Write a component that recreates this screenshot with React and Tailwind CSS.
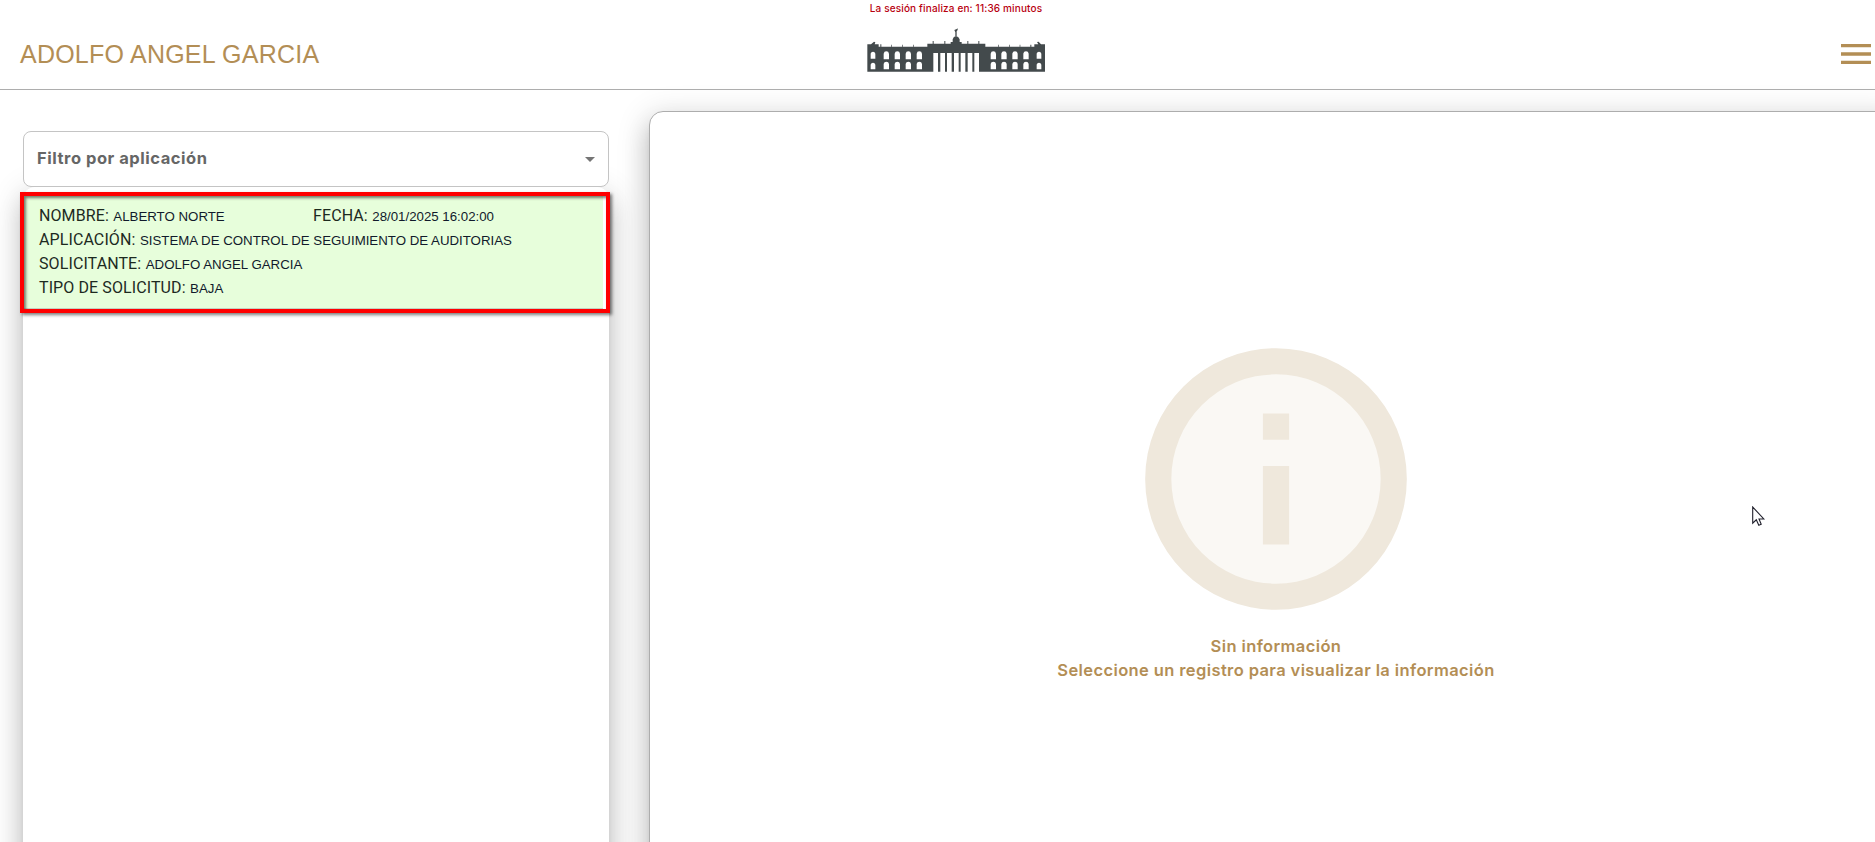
const windowsX = [130, 163, 196, 229, 451, 483, 516, 549];
const shadow =
  "shadow-[0px_8px_10px_-5px_rgba(0,0,0,0.2),0px_16px_24px_2px_rgba(0,0,0,0.14),0px_6px_30px_5px_rgba(0,0,0,0.12)]";

function Palace() {
  return (
    <svg className="h-[45px] w-[179px]" viewBox="80 82 537 135" fill="#434a4c">
      <path d="M81 216V134H92L101 126L105 128L103 134H115V141H120V134H123V141H153V135H155V141H186V135H188V141H218V135H220V141H261V132H277V124H280V132H312V124H315V132H331V127H337V119L341 111H345V98L342 91L349 88L352 86V91L349 95V111H353L358 119V127H364V132H381V124H384V132H414V124H417V132H435V141H474V135H476V141H506V135H508V141H538V135H540V141H570V135H573V141H582V134H594L590 127L595 126L602 134H614V216Z" />
      <g fill="#fff">
        {windowsX.map((x) => (
          <g key={x}>
            <path d={`M${x} 179V162Q${x + 1} 155 ${x + 8} 155Q${x + 15} 155 ${x + 16} 162V179Z`} />
            <path d={`M${x} 209V193Q${x + 1} 186 ${x + 8} 186Q${x + 15} 186 ${x + 16} 193V209Z`} />
          </g>
        ))}
        {[91, 589].map((x) => (
          <g key={x}>
            <path d={`M${x} 177V162Q${x + 1} 156 ${x + 7} 156Q${x + 13} 156 ${x + 14} 162V177Z`} />
            <path d={`M${x} 209V195Q${x + 1} 189 ${x + 7} 189Q${x + 13} 189 ${x + 14} 195V209Z`} />
          </g>
        ))}
        {[279, 300, 320, 341, 361, 382, 402].map((x) => (
          <rect key={x} x={x} y="160" width="14" height="57" />
        ))}
      </g>
    </svg>
  );
}

function Field({ label, value }) {
  return (
    <p className="h-6 whitespace-nowrap">
      <span className="font-[Roboto,sans-serif] text-[16px] tracking-[0.1px]">{label}:</span>{" "}
      <span className="text-[13.28px] text-[#111a2b]">{value}</span>
    </p>
  );
}

export default function App() {
  return (
    <div className="relative flex h-[842px] w-[1875px] flex-col overflow-hidden bg-white font-['Liberation_Sans',Arial,sans-serif]">
      <header className="relative z-10 grid h-[90px] shrink-0 grid-cols-3 border-b border-[#adadad]">
        <h1 className="pt-[36px] pl-5 text-[25px] leading-9 tracking-[0.23px] whitespace-nowrap text-[#b38e55]">ADOLFO ANGEL GARCIA</h1>
        <div className="flex flex-col items-center pl-[37px]">
          <p className="h-[27px] font-[Inter,sans-serif] text-[10px] leading-[17px] font-medium tracking-[0.15px] whitespace-nowrap text-[#b8000f]">La sesión finaliza en: 11:36 minutos</p>
          <Palace />
        </div>
        <button className="mt-[34px] mr-[-1px] h-10 w-10 justify-self-end" aria-label="Menú">
          <svg viewBox="0 0 40 40" className="h-10 w-10" fill="#b38e55">
            <path d="M5 10h30v3.33H5zM5 18.33h30v3.33H5zM5 26.67h30V30H5z" />
          </svg>
        </button>
      </header>
      <main className="flex min-h-0 flex-1">
        <aside className="ml-[23px] flex w-[586px] shrink-0 flex-col pt-[41px]">
          <div className="relative z-10 flex h-[56px] shrink-0 items-center justify-between rounded-lg border border-[#c4c4c4] bg-white pr-[6px] pl-[13px]">
            <span className="pb-[2px] font-[Inter,sans-serif] text-[16.5px] font-bold tracking-[0.53px] text-[#666]">Filtro por aplicación</span>
            <svg viewBox="0 0 24 24" className="h-6 w-6" fill="#757575"><path d="m7 10 5 5 5-5z" /></svg>
          </div>
          <div className={`h-[900px] shrink-0 rounded-xl bg-white ${shadow}`}>
            <div className="relative mt-[5px] -ml-[3px] h-[121px] w-[590px] border-4 border-[#ff0000] bg-white shadow-[2px_2px_3px_rgba(0,0,0,0.5)]">
              <article className="h-[113px] w-[579px] border-b border-[#c8d5c5] bg-[#e7fedb] pt-[8px] pl-[15px] leading-6 text-[#1d2a1f]">
                <div className="grid grid-cols-[274px_1fr]">
                  <Field label="NOMBRE" value="ALBERTO NORTE" />
                  <Field label="FECHA" value="28/01/2025 16:02:00" />
                </div>
                <Field label="APLICACIÓN" value="SISTEMA DE CONTROL DE SEGUIMIENTO DE AUDITORIAS" />
                <Field label="SOLICITANTE" value="ADOLFO ANGEL GARCIA" />
                <Field label="TIPO DE SOLICITUD" value="BAJA" />
              </article>
              <div className="pointer-events-none absolute inset-0 shadow-[inset_2px_2px_3px_rgba(0,0,0,0.5)]" />
            </div>
          </div>
        </aside>
        <section className={`mt-[21px] ml-10 flex h-[900px] w-[1254px] shrink-0 flex-col items-center rounded-[14px] border border-[#adadad] bg-white pt-[210px] ${shadow}`}>
          <svg viewBox="0 0 24 24" className="h-[314px] w-[314px] shrink-0">
            <circle cx="12" cy="12" r="9" fill="#faf8f4" />
            <path fill="#efe8dc" fillRule="evenodd" d="M12 2a10 10 0 1 0 0 20 10 10 0 0 0 0-20zm0 18a8 8 0 1 1 0-16 8 8 0 0 1 0 16zM11 7h2v2h-2zm0 4h2v6h-2z" />
          </svg>
          <div className="-mt-[2px] text-center font-[Inter,sans-serif] text-[16.5px] leading-6 font-semibold tracking-[0.39px] text-[#b38e55]">
            <p>Sin información</p>
            <p>Seleccione un registro para visualizar la información</p>
          </div>
        </section>
      </main>
      <svg className="absolute top-[506px] left-[1752px] h-[22px] w-[14px]" viewBox="0 0 14 22">
        <path d="M.7 1V17.2L4.3 13.8L6.8 19.3L9.2 18.3L7 13H11.8Z" fill="#fff" stroke="#20202c" strokeWidth="1.1" />
      </svg>
    </div>
  );
}
